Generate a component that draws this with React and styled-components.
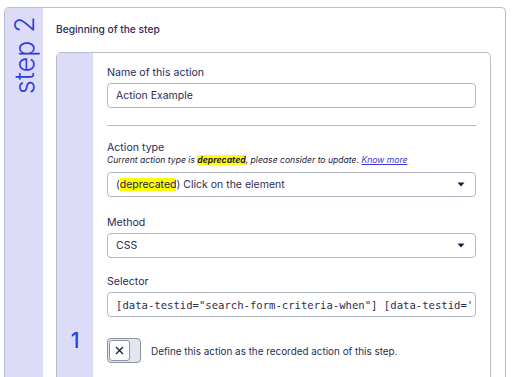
import React from "react";
import styled, { createGlobalStyle } from "styled-components";

const Global = createGlobalStyle`
  html, body { margin: 0; padding: 0; background: #ffffff; overflow: hidden; }
  body { font-family: Inter, "Noto Sans", sans-serif; color: #2b2a5c; }
  * { box-sizing: border-box; }
`;

const Page = styled.div`
  padding: 7px 6px 0 4px;
  height: 377px;
  overflow: hidden;
`;

const OuterCard = styled.div`
  display: flex;
  border: 1px solid #b9bdc9;
  border-bottom: none;
  border-radius: 5px 5px 0 0;
  min-height: 600px;
  overflow: hidden;
`;

const StepRail = styled.div`
  width: 38px;
  flex: none;
  background: #dcdcf8;
  display: flex;
  justify-content: center;
  padding-top: 8px;
`;

const StepLabel = styled.div`
  writing-mode: vertical-rl;
  transform: rotate(180deg);
  font-family: Inter, sans-serif;
  font-weight: 300;
  font-size: 26.5px;
  line-height: 26px;
  color: #2f3ce0;
  height: 78px;
  text-align: right;
  letter-spacing: 0.2px;
`;

const StepBody = styled.div`
  flex: 1;
  min-width: 0;
  padding: 14px 14px 0 13px;
`;

const SectionTitle = styled.div`
  font-size: 10.2px;
  font-weight: 500;
  line-height: 14px;
  color: #2b2a5c;
  margin-bottom: 16px;
`;

const ActionCard = styled.div`
  display: flex;
  border: 1px solid #b9bdc9;
  border-radius: 5px;
  min-height: 560px;
`;

const ActionRail = styled.div`
  width: 36px;
  flex: none;
  background: #dcdcf8;
  display: flex;
  justify-content: center;
  padding-top: 276px;
`;

const ActionNumber = styled.div`
  font-family: Inter, sans-serif;
  font-size: 21px;
  font-weight: 500;
  line-height: 24px;
  color: #2f3ce0;
  height: 24px;
`;

const Form = styled.div`
  flex: 1;
  min-width: 0;
  padding: 13px 14px 0 14px;
  display: flex;
  flex-direction: column;
`;

const Field = styled.div`
  display: flex;
  flex-direction: column;
  margin-bottom: ${(p) => p.$gap || 0}px;
`;

const Label = styled.div`
  font-size: 10.6px;
  line-height: 14px;
  color: #2b2a5c;
  margin-bottom: ${(p) => (p.$tight ? 0 : 3)}px;
`;

const Hint = styled.div`
  font-size: 8.6px;
  font-style: italic;
  line-height: 11px;
  color: #1d1b3a;
  margin-bottom: 6px;
  white-space: nowrap;
`;

const Mark = styled.span`
  background: #ffff00;
  font-weight: ${(p) => (p.$bold ? 700 : "inherit")};
  color: #1d1b3a;
`;

const Link = styled.a`
  color: #3b3bdb;
  text-decoration: underline;
`;

const Box = styled.div`
  height: 25px;
  border: 1px solid #b4b8c6;
  border-radius: 4px;
  background: #fff;
  display: flex;
  align-items: center;
  padding: ${(p) => (p.$mono ? "0 1px 0 8px" : "0 8px")};
  font-size: ${(p) => (p.$mono ? "10.6px" : "10.5px")};
  font-family: ${(p) =>
    p.$mono ? '"DejaVu Sans Mono", monospace' : "Inter, sans-serif"};
  color: #2e2d50;
  white-space: nowrap;
  overflow: hidden;
  min-width: 0;
`;

const BoxText = styled.span`
  flex: 1;
  min-width: 0;
  overflow: hidden;
`;

const Caret = styled.svg`
  flex: none;
  width: 8px;
  height: 5px;
  margin-right: 2px;
`;

const Divider = styled.div`
  height: 1px;
  background: #b4b8c6;
  margin: 17px 0 15px;
`;

const CheckRow = styled.div`
  display: flex;
  align-items: center;
  gap: 10px;
  margin-top: 21px;
`;

const Toggle = styled.div`
  width: 34px;
  height: 25px;
  border: 1px solid #8d93a5;
  border-radius: 4px;
  background: #e4e6ef;
  padding: 1px;
  display: flex;
`;

const Knob = styled.div`
  width: 21px;
  height: 21px;
  background: #fff;
  border: 1px solid #8d93a5;
  border-radius: 3px;
  display: flex;
  align-items: center;
  justify-content: center;
`;

const CheckText = styled.div`
  font-size: 9.9px;
  color: #2e2d50;
  white-space: nowrap;
`;

const Select = ({ children }) => (
  <Box>
    <BoxText>{children}</BoxText>
    <Caret viewBox="0 0 8 5">
      <path d="M0.5 0.5 H7.5 L4 4.5 Z" fill="#1d1b3a" />
    </Caret>
  </Box>
);

export default function App() {
  return (
    <>
      <Global />
      <Page>
        <OuterCard>
          <StepRail>
            <StepLabel>step 2</StepLabel>
          </StepRail>
          <StepBody>
            <SectionTitle>Beginning of the step</SectionTitle>
            <ActionCard>
              <ActionRail>
                <ActionNumber>1</ActionNumber>
              </ActionRail>
              <Form>
                <Field>
                  <Label>Name of this action</Label>
                  <Box>Action Example</Box>
                </Field>
                <Divider />
                <Field $gap={19}>
                  <Label $tight>Action type</Label>
                  <Hint>
                    Current action type is <Mark $bold>deprecated</Mark>, please
                    consider to update. <Link>Know more</Link>
                  </Hint>
                  <Select>
                    (<Mark>deprecated</Mark>) Click on the element
                  </Select>
                </Field>
                <Field $gap={17}>
                  <Label>Method</Label>
                  <Select>CSS</Select>
                </Field>
                <Field>
                  <Label>Selector</Label>
                  <Box $mono>
                    <BoxText>
                      [data-testid="search-form-criteria-when"] [data-testid='
                    </BoxText>
                  </Box>
                </Field>
                <CheckRow>
                  <Toggle>
                    <Knob>
                      <svg width="9" height="9" viewBox="0 0 9 9">
                        <path
                          d="M1 1 L8 8 M8 1 L1 8"
                          stroke="#1d1b3a"
                          strokeWidth="1.3"
                          fill="none"
                        />
                      </svg>
                    </Knob>
                  </Toggle>
                  <CheckText>
                    Define this action as the recorded action of this step.
                  </CheckText>
                </CheckRow>
              </Form>
            </ActionCard>
          </StepBody>
        </OuterCard>
      </Page>
    </>
  );
}
